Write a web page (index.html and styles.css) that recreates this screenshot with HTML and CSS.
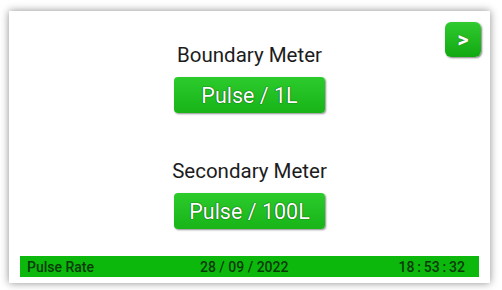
FILE: index.html
```html
<!DOCTYPE html>
<html lang="en">
<head>
  <meta charset="UTF-8" />
  <meta name="viewport" content="width=device-width, initial-scale=1.0"/>
  <title>Pulse Rate</title>
  <link rel="stylesheet" href="styles.css">
</head>
<body>
  <div class="tela">
    <button class="avancar">&gt;</button>

    <div class="medidor">
      <div class="titulo">Boundary Meter</div>
      <button class="pulso">Pulse / 1L</button>
    </div>

    <div class="medidor segundo">
      <div class="titulo">Secondary Meter</div>
      <button class="pulso">Pulse / 100L</button>
    </div>

    <div class="rodape">
      <span>Pulse Rate</span>
      <span id="data">28 / 09 / 2022</span>
      <span id="hora">18&thinsp;:&thinsp;53&thinsp;:&thinsp;32</span>
    </div>
  </div>
</body>
</html>
```

FILE: styles.css
```css
body {
  background-color: #fff;
  margin: 0;
  height: 290px;
  font-family: Roboto, 'Liberation Sans', sans-serif;
}

.tela {
  position: relative;
  margin: 11px 12px 0 9px;
  height: 272px;
  background-color: #fff;
  box-shadow: 0 0 8px rgba(0, 0, 0, 0.45);
  display: flex;
  flex-direction: column;
  align-items: center;
  padding: 32px 11px 6px;
  box-sizing: border-box;
}

.avancar {
  position: absolute;
  top: 11px;
  right: 9px;
  width: 36px;
  height: 35px;
  border: none;
  border-radius: 6px;
  background: linear-gradient(#2fcb2f, #12a812);
  box-shadow: 1px 1px 2px rgba(0, 0, 0, 0.5);
  color: #fff;
  font-family: Roboto, sans-serif;
  font-size: 22px;
  font-weight: bold;
  text-shadow: 0 0 1px #064006;
  padding: 0;
}

.medidor {
  display: flex;
  flex-direction: column;
  align-items: center;
  gap: 10px;
}

.segundo {
  margin-top: 46px;
}

.titulo {
  font-size: 20.5px;
  line-height: 24px;
  color: #1c1c1c;
}

.pulso {
  width: 151px;
  height: 36px;
  border: none;
  border-radius: 4px;
  background: linear-gradient(#2ccb2c, #18b418);
  box-shadow: 1px 1px 2px rgba(0, 0, 0, 0.45);
  color: #fff;
  font-family: Roboto, sans-serif;
  font-size: 21.5px;
  text-shadow: 0 0 1px #0a4a0a, 0 0 1px #0a4a0a;
  padding: 0;
}

.rodape {
  margin-top: auto;
  align-self: stretch;
  height: 21px;
  background-color: #0cb80c;
  display: flex;
  justify-content: space-between;
  align-items: center;
  padding: 0 14px 0 7px;
  font-size: 14px;
  font-weight: 500;
  color: #0a3a0a;
}

#data {
  margin-right: 4px;
}
```
